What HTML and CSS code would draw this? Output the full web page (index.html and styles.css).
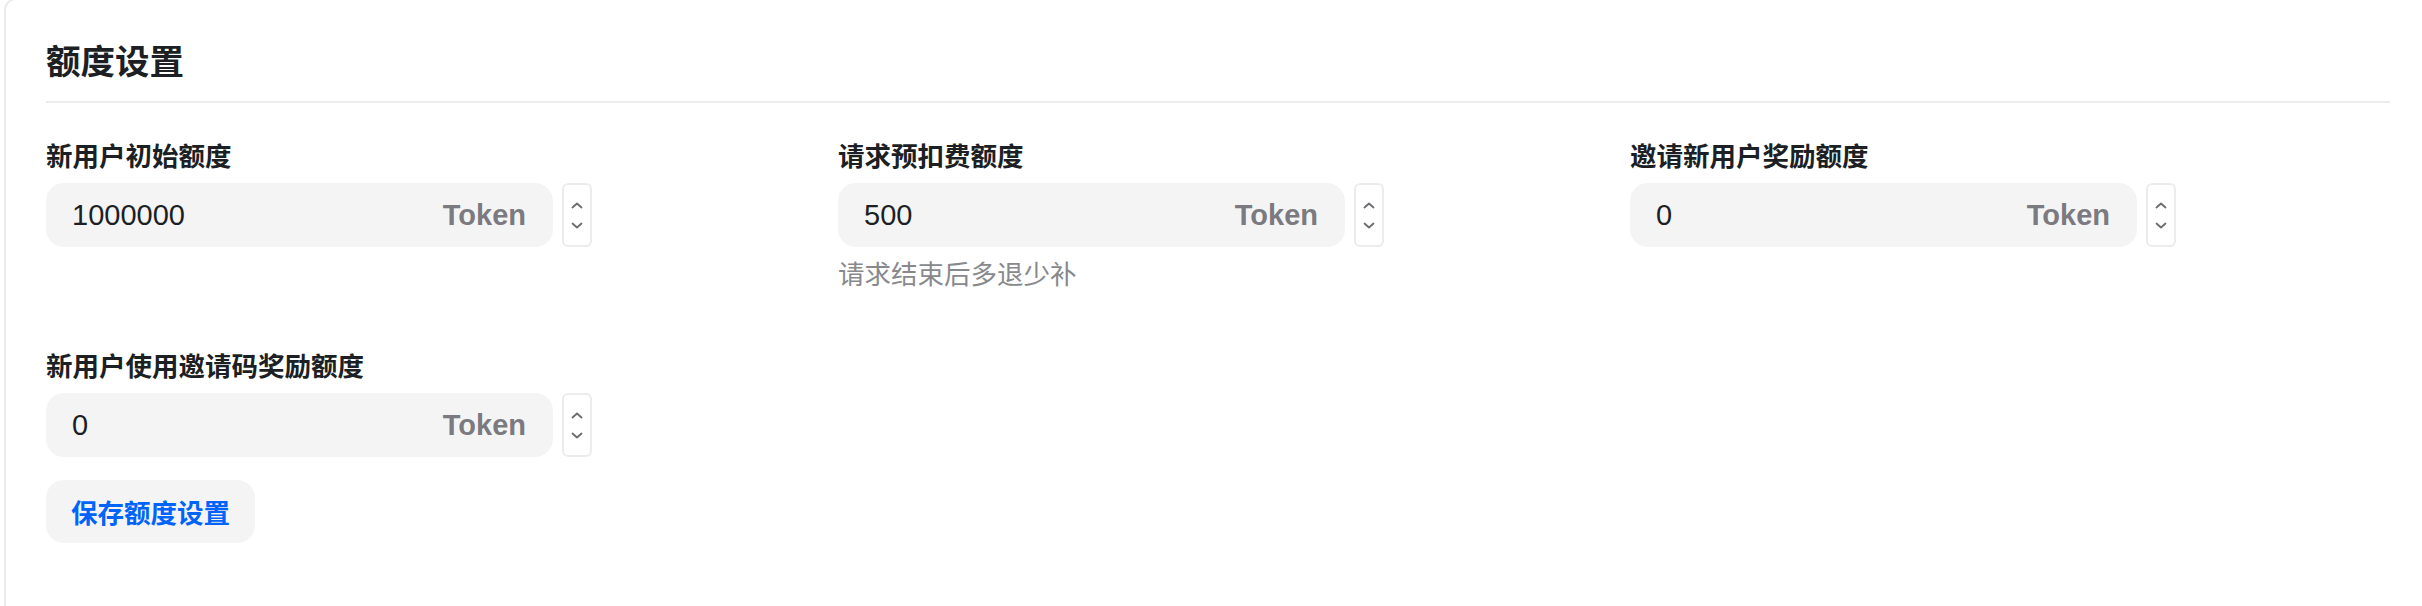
FILE: index.html
```html
<!DOCTYPE html>
<html lang="zh-CN">
<head>
  <meta charset="UTF-8" />
  <meta name="viewport" content="width=device-width, initial-scale=1.0"/>
  <title>额度设置</title>
  <link rel="stylesheet" href="styles.css">
</head>
<body>
  <div class="card">
    <h2 class="card-title">额度设置</h2>

    <div class="form-grid">
      <div class="field">
        <label class="field-label">新用户初始额度</label>
        <div class="number-row">
          <div class="number-input">
            <span class="value">1000000</span>
            <span class="suffix">Token</span>
          </div>
          <div class="spinner">
            <svg viewBox="0 0 12 7" class="chev"><path d="M1.5 5.5 6 1.5l4.5 4"/></svg>
            <svg viewBox="0 0 12 7" class="chev"><path d="M1.5 1.5 6 5.5l4.5-4"/></svg>
          </div>
        </div>
      </div>

      <div class="field">
        <label class="field-label">请求预扣费额度</label>
        <div class="number-row">
          <div class="number-input">
            <span class="value">500</span>
            <span class="suffix">Token</span>
          </div>
          <div class="spinner">
            <svg viewBox="0 0 12 7" class="chev"><path d="M1.5 5.5 6 1.5l4.5 4"/></svg>
            <svg viewBox="0 0 12 7" class="chev"><path d="M1.5 1.5 6 5.5l4.5-4"/></svg>
          </div>
        </div>
        <p class="field-help">请求结束后多退少补</p>
      </div>

      <div class="field">
        <label class="field-label">邀请新用户奖励额度</label>
        <div class="number-row">
          <div class="number-input">
            <span class="value">0</span>
            <span class="suffix">Token</span>
          </div>
          <div class="spinner">
            <svg viewBox="0 0 12 7" class="chev"><path d="M1.5 5.5 6 1.5l4.5 4"/></svg>
            <svg viewBox="0 0 12 7" class="chev"><path d="M1.5 1.5 6 5.5l4.5-4"/></svg>
          </div>
        </div>
      </div>

      <div class="field">
        <label class="field-label">新用户使用邀请码奖励额度</label>
        <div class="number-row">
          <div class="number-input">
            <span class="value">0</span>
            <span class="suffix">Token</span>
          </div>
          <div class="spinner">
            <svg viewBox="0 0 12 7" class="chev"><path d="M1.5 5.5 6 1.5l4.5 4"/></svg>
            <svg viewBox="0 0 12 7" class="chev"><path d="M1.5 1.5 6 5.5l4.5-4"/></svg>
          </div>
        </div>
      </div>
    </div>

    <button class="save-btn">保存额度设置</button>
  </div>
</body>
</html>
```

FILE: styles.css
```css
* {
  margin: 0;
  padding: 0;
  box-sizing: border-box;
}

body {
  font-family: 'Liberation Sans', 'Noto Sans CJK SC', sans-serif;
  background: #fff;
  color: #1c1f23;
  overflow: hidden;
}

.card {
  width: 2428px;
  min-height: 700px;
  margin: -2px 0 0 4px;
  padding: 38px 40px 36px;
  border: 2px solid #ececec;
  border-radius: 12px;
}

.card-title {
  font-size: 34.5px;
  font-weight: 600;
  line-height: 48px;
  padding-bottom: 15px;
  border-bottom: 2px solid #ececec;
  margin-bottom: 36px;
}

.form-grid {
  display: grid;
  grid-template-columns: repeat(3, 1fr);
  column-gap: 32px;
  row-gap: 56px;
  align-items: start;
}

.field {
  display: flex;
  flex-direction: column;
}

.field-label {
  font-size: 26.5px;
  font-weight: 600;
  line-height: 36px;
  margin-bottom: 8px;
}

.number-row {
  display: flex;
  gap: 9px;
}

.number-input {
  width: 507px;
  height: 64px;
  background: #f4f4f5;
  border-radius: 18px;
  padding: 0 27px 0 26px;
  display: flex;
  align-items: center;
  justify-content: space-between;
  font-size: 29px;
}

.value {
  color: #1c1f23;
}

.suffix {
  color: #7a7a80;
  font-weight: 600;
}

.spinner {
  width: 30px;
  height: 64px;
  border: 2px solid #ececec;
  border-radius: 6px;
  display: flex;
  flex-direction: column;
  align-items: center;
  justify-content: space-around;
  padding: 10px 0;
}

.chev {
  width: 12px;
  height: 7px;
  fill: none;
  stroke: #6b6b70;
  stroke-width: 1.8;
  stroke-linecap: round;
  stroke-linejoin: round;
}

.field-help {
  font-size: 26.5px;
  line-height: 36px;
  margin-top: 10px;
  color: #88898d;
}

.save-btn {
  margin-top: 23px;
  height: 63px;
  padding: 0 25px;
  border: none;
  border-radius: 18px;
  background: #f4f4f5;
  color: #0064fa;
  font-family: inherit;
  font-size: 26.5px;
  font-weight: 600;
  cursor: pointer;
}
```
